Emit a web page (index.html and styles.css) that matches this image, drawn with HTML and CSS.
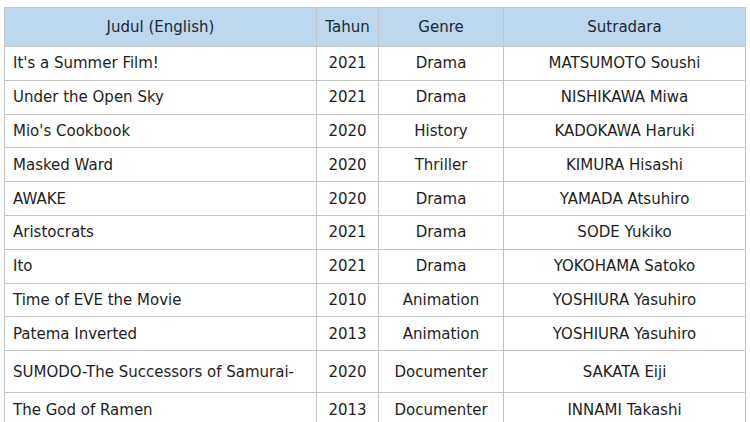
FILE: index.html
```html
<!DOCTYPE html>
<html>
<head>
<meta charset="utf-8">
<link rel="stylesheet" href="styles.css">
</head>
<body>
<table class="films">
  <colgroup>
    <col class="c-title">
    <col class="c-year">
    <col class="c-genre">
    <col class="c-dir">
  </colgroup>
  <thead>
    <tr><th>Judul (English)</th><th>Tahun</th><th>Genre</th><th>Sutradara</th></tr>
  </thead>
  <tbody>
    <tr><td class="title">It's a Summer Film!</td><td>2021</td><td>Drama</td><td>MATSUMOTO Soushi</td></tr>
    <tr><td class="title">Under the Open Sky</td><td>2021</td><td>Drama</td><td>NISHIKAWA Miwa</td></tr>
    <tr><td class="title">Mio's Cookbook</td><td>2020</td><td>History</td><td>KADOKAWA Haruki</td></tr>
    <tr><td class="title">Masked Ward</td><td>2020</td><td>Thriller</td><td>KIMURA Hisashi</td></tr>
    <tr><td class="title">AWAKE</td><td>2020</td><td>Drama</td><td>YAMADA Atsuhiro</td></tr>
    <tr><td class="title">Aristocrats</td><td>2021</td><td>Drama</td><td>SODE Yukiko</td></tr>
    <tr><td class="title">Ito</td><td>2021</td><td>Drama</td><td>YOKOHAMA Satoko</td></tr>
    <tr><td class="title">Time of EVE the Movie</td><td>2010</td><td>Animation</td><td>YOSHIURA Yasuhiro</td></tr>
    <tr><td class="title">Patema Inverted</td><td>2013</td><td>Animation</td><td>YOSHIURA Yasuhiro</td></tr>
    <tr class="tall"><td class="title">SUMODO-The Successors of Samurai-</td><td>2020</td><td>Documenter</td><td>SAKATA Eiji</td></tr>
    <tr><td class="title">The God of Ramen</td><td>2013</td><td>Documenter</td><td>INNAMI Takashi</td></tr>
  </tbody>
</table>
</body>
</html>
```
FILE: styles.css
```css
html, body {
  margin: 0;
  background: #ffffff;
}
body {
  padding: 7px 0 0 4px;
  font-family: "DejaVu Sans", Verdana, sans-serif;
  font-size: 15px;
  color: #1e1e1e;
}
.films {
  border-collapse: collapse;
  table-layout: fixed;
  width: 741px;
}
.c-title { width: 312px; }
.c-year { width: 62px; }
.c-genre { width: 125px; }
.c-dir { width: 242px; }
.films th,
.films td {
  border: 1px solid #c4c4c4;
  text-align: center;
  padding: 0 8px;
  white-space: nowrap;
  overflow: hidden;
}
.films th {
  background: #bdd7ee;
  font-weight: normal;
  height: 38px;
  color: #1b2633;
}
.films td {
  height: 32.8px;
}
.films td.title {
  text-align: left;
}
.films tr.tall td {
  height: 41px;
}
```
